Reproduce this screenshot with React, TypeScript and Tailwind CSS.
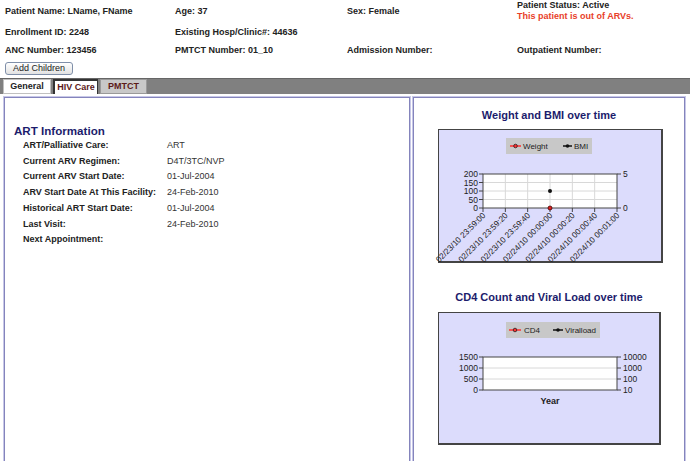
import React from "react";

const F = "'Liberation Sans', Arial, sans-serif";

function Chart1() {
  const xs = [0, 1, 2, 3, 4, 5, 6].map((i) => 44 + i * (134 / 6));
  const labels = [
    "02/23/10 23:59:00",
    "02/23/10 23:59:20",
    "02/23/10 23:59:40",
    "02/24/10 00:00:00",
    "02/24/10 00:00:20",
    "02/24/10 00:00:40",
    "02/24/10 00:01:00",
  ];
  const ys = [44, 52.5, 61, 69.5, 78];
  const yl = ["200", "150", "100", "50", "0"];
  return (
    <svg width="222" height="131" style={{ overflow: "visible", fontFamily: F }}>
      <rect x="67" y="8" width="86" height="16" fill="#c8c8c8" />
      <line x1="71" y1="16" x2="82" y2="16" stroke="#ff3030" strokeWidth="1.5" />
      <circle cx="76.5" cy="16" r="1.8" fill="#ff3030" stroke="#222" strokeWidth="0.8" />
      <text x="84" y="19" fontSize="8" fill="#222">Weight</text>
      <line x1="124" y1="16" x2="133" y2="16" stroke="#111" strokeWidth="1.5" />
      <circle cx="128.5" cy="16" r="1.8" fill="#111" />
      <text x="135" y="19" fontSize="8" fill="#222">BMI</text>

      <rect x="44" y="44" width="134" height="34" fill="#fff" />
      {xs.slice(1, 6).map((x, i) => (
        <line key={i} x1={x} y1="44" x2={x} y2="78" stroke="#d8d8d8" strokeWidth="1" />
      ))}
      {ys.slice(1, 4).map((y, i) => (
        <line key={i} x1="44" y1={y} x2="178" y2={y} stroke="#d8d8d8" strokeWidth="1" />
      ))}
      <rect x="44" y="44" width="134" height="34" fill="none" stroke="#444" strokeWidth="1" />
      {ys.map((y, i) => (
        <g key={i}>
          <line x1="40" y1={y} x2="44" y2={y} stroke="#444" />
          <text x="39" y={y + 3} fontSize="8.5" textAnchor="end" fill="#222">{yl[i]}</text>
        </g>
      ))}
      <line x1="178" y1="44" x2="182" y2="44" stroke="#444" />
      <line x1="178" y1="78" x2="182" y2="78" stroke="#444" />
      <text x="184" y="47" fontSize="8.5" fill="#222">5</text>
      <text x="184" y="81" fontSize="8.5" fill="#222">0</text>
      {xs.map((x, i) => (
        <g key={i}>
          <line x1={x} y1="78" x2={x} y2="82" stroke="#444" />
          <text
            x={x + 3}
            y="86"
            fontSize="8.2"
            textAnchor="end"
            fill="#222"
            transform={`rotate(-45 ${x + 3} 86)`}
          >
            {labels[i]}
          </text>
        </g>
      ))}
      <circle cx="111" cy="61" r="2" fill="#111" />
      <circle cx="111" cy="78" r="2" fill="#e02020" stroke="#400" strokeWidth="0.8" />
    </svg>
  );
}

function Chart2() {
  const ys = [44, 55, 66, 77];
  const yl = ["1500", "1000", "500", "0"];
  const yr = ["10000", "1000", "100", "10"];
  return (
    <svg width="221" height="130" style={{ overflow: "visible", fontFamily: F }}>
      <rect x="67" y="9" width="94" height="16" fill="#c8c8c8" />
      <line x1="70" y1="17" x2="82" y2="17" stroke="#ff3030" strokeWidth="1.5" />
      <circle cx="76" cy="17" r="1.8" fill="#ff3030" stroke="#222" strokeWidth="0.8" />
      <text x="85" y="20" fontSize="8" fill="#222">CD4</text>
      <line x1="114" y1="17" x2="124" y2="17" stroke="#111" strokeWidth="1.5" />
      <circle cx="119" cy="17" r="1.8" fill="#111" />
      <text x="126" y="20" fontSize="8" fill="#222">Viralload</text>

      <rect x="44" y="44" width="134" height="33" fill="#fff" />
      <line x1="44" y1="55" x2="178" y2="55" stroke="#d8d8d8" />
      <line x1="44" y1="66" x2="178" y2="66" stroke="#d8d8d8" />
      <rect x="44" y="44" width="134" height="33" fill="none" stroke="#444" />
      {ys.map((y, i) => (
        <g key={i}>
          <line x1="40" y1={y} x2="44" y2={y} stroke="#444" />
          <text x="39" y={y + 3} fontSize="8.5" textAnchor="end" fill="#222">{yl[i]}</text>
          <line x1="178" y1={y} x2="182" y2={y} stroke="#444" />
          <text x="184" y={y + 3} fontSize="8.5" fill="#222">{yr[i]}</text>
        </g>
      ))}
      <text x="111" y="91" fontSize="9" fontWeight="bold" textAnchor="middle" fill="#222">Year</text>
    </svg>
  );
}

const rows: [string, string][] = [
  ["ART/Palliative Care:", "ART"],
  ["Current ARV Regimen:", "D4T/3TC/NVP"],
  ["Current ARV Start Date:", "01-Jul-2004"],
  ["ARV Start Date At This Facility:", "24-Feb-2010"],
  ["Historical ART Start Date:", "01-Jul-2004"],
  ["Last Visit:", "24-Feb-2010"],
  ["Next Appointment:", ""],
];

export default function App() {
  return (
    <div className="w-[690px] h-[461px] overflow-hidden bg-white font-['Liberation_Sans',Arial,sans-serif] text-[#222]">
      <div className="pl-[5px] grid grid-cols-[170px_172px_170px_1fr] text-[9px] font-bold leading-[11px]">
        <div className="h-[22px] flex items-center">Patient Name: LName, FName</div>
        <div className="h-[22px] flex items-center">Age: 37</div>
        <div className="h-[22px] flex items-center">Sex: Female</div>
        <div className="h-[22px] flex flex-col justify-center">
          <div>Patient Status: Active</div>
          <div className="text-[#e8402a]">This patient is out of ARVs.</div>
        </div>
        <div className="h-[20px] flex items-center">Enrollment ID: 2248</div>
        <div className="h-[20px] flex items-center">Existing Hosp/Clinic#: 44636</div>
        <div className="h-[20px]" />
        <div className="h-[20px]" />
        <div className="h-[16px] flex items-center">ANC Number: 123456</div>
        <div className="h-[16px] flex items-center">PMTCT Number: 01_10</div>
        <div className="h-[16px] flex items-center">Admission Number:</div>
        <div className="h-[16px] flex items-center">Outpatient Number:</div>
      </div>

      <button className="ml-[5px] mt-[4px] h-[13px] w-[68px] border border-[#7f8fa9] rounded-[3px] bg-linear-to-b from-white to-[#e2e2e2] text-[9px] leading-none flex items-center justify-center text-[#222]">
        Add Children
      </button>

      <div className="mt-[3px] h-[16px] bg-[#808080] border-t border-[#666] flex items-stretch gap-[2px] pl-[3px] text-[9px] font-bold">
        <div className="w-[48px] bg-white border border-[#c0c0c0] flex items-center justify-center text-[#222]">
          General
        </div>
        <div className="w-[45px] bg-white border-l-2 border-t-2 border-r border-[#333] flex items-center justify-center text-[#5c1a1a]">
          HIV Care
        </div>
        <div className="w-[47px] bg-[#c8c8c8] border border-[#999] flex items-center justify-center text-[#5c1a1a]">
          PMTCT
        </div>
      </div>

      <div className="mt-[2px] flex">
        <div className="ml-[3px] w-[408px] h-[380px] border border-[#c8c8e8] shadow-[inset_0_0_0_1px_#8484bc] pl-[10px] pt-[27px]">
          <div className="text-[11.6px] font-bold text-[#1c1c6c] leading-[14px]">ART Information</div>
          <div className="pl-[9px] text-[9px] leading-[15.7px]">
            {rows.map(([l, v]) => (
              <div key={l} className="flex">
                <div className="w-[144px] font-bold">{l}</div>
                <div className="text-[#333]">{v}</div>
              </div>
            ))}
          </div>
        </div>

        <div className="ml-[1px] w-[274px] h-[380px] border border-[#c8c8e8] shadow-[inset_0_0_0_1px_#8484bc] pt-[11px]">
          <div className="text-center text-[11px] font-bold text-[#1c1c6c] leading-[14px]">Weight and BMI over time</div>
          <div className="ml-[25px] mt-[7px] w-[225px] h-[134px] border-t border-l border-r-2 border-b-2 border-[#444] bg-[#dcdcfc]">
            <Chart1 />
          </div>
          <div className="mt-[27px] text-center text-[11px] font-bold text-[#1c1c6c] leading-[14px]">
            CD4 Count and Viral Load over time
          </div>
          <div className="ml-[25px] mt-[8px] w-[223px] h-[133px] border-t border-l border-r-2 border-b-2 border-[#444] bg-[#dcdcfc]">
            <Chart2 />
          </div>
        </div>
      </div>
    </div>
  );
}
